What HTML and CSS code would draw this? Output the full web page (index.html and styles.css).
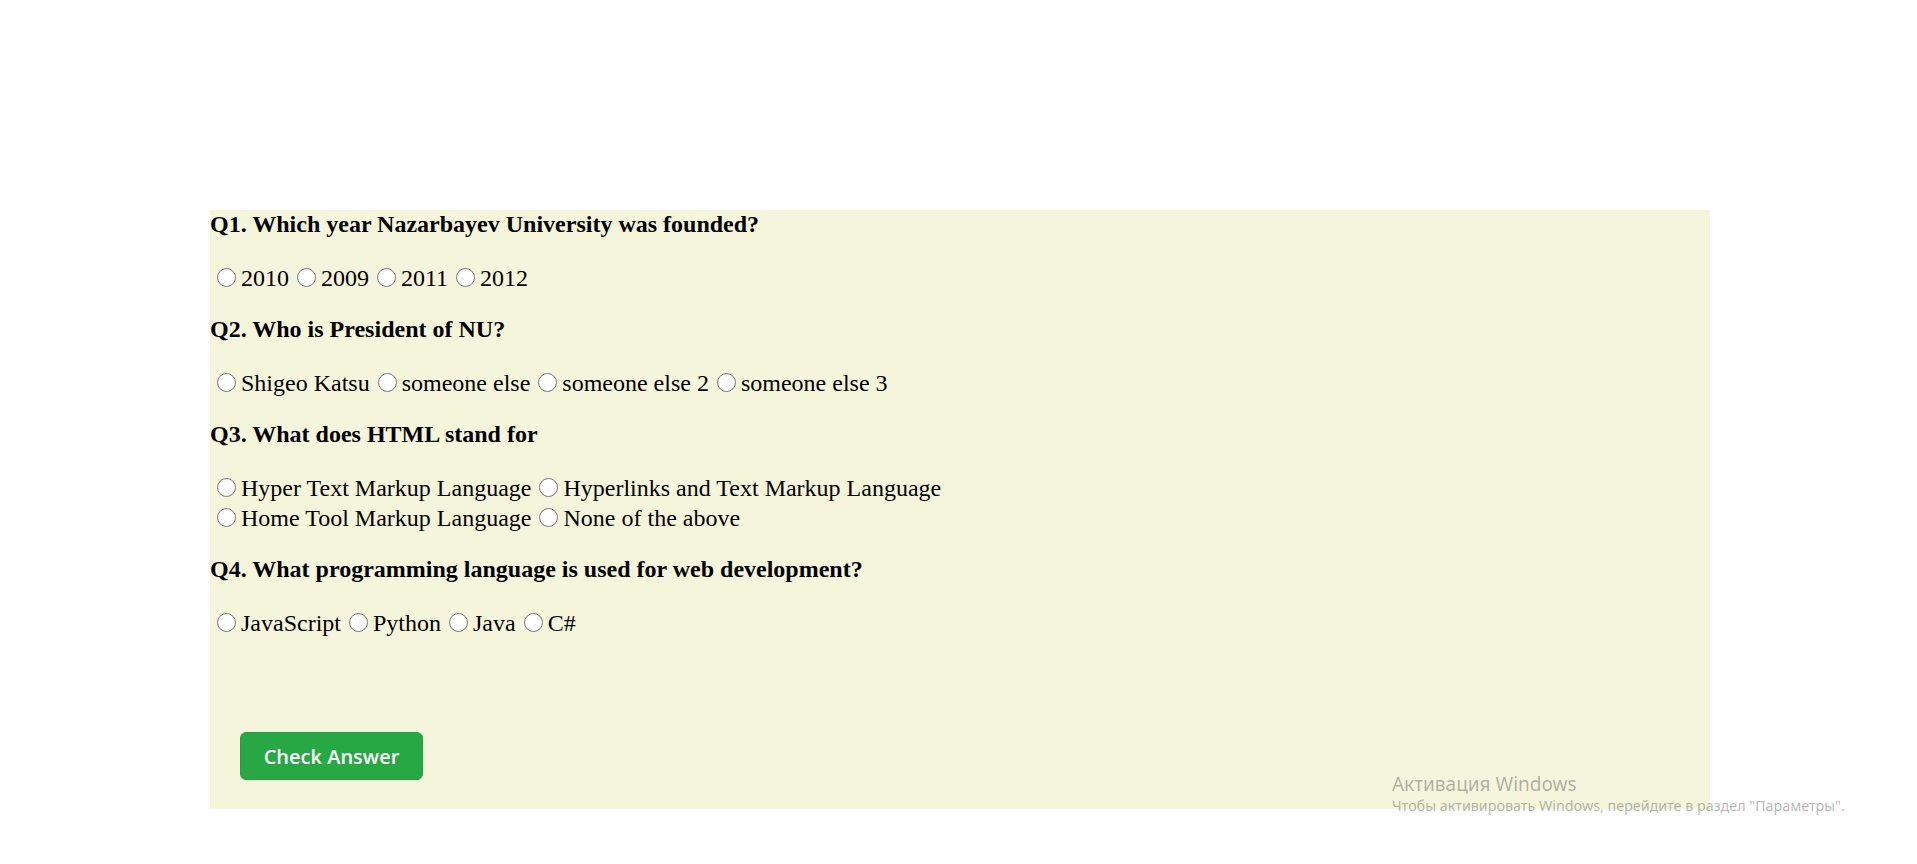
FILE: index.html
```html
<!DOCTYPE html>
<html>
<head>
<meta charset="utf-8">
<link rel="stylesheet" href="styles.css">
</head>
<body>
<div class="quiz">
  <h3 class="question">Q1. Which year Nazarbayev University was founded?</h3>
  <div class="options">
    <input type="radio" name="q1" class="radio">2010 <input type="radio" name="q1" class="radio">2009 <input type="radio" name="q1" class="radio">2011 <input type="radio" name="q1" class="radio">2012
  </div>
  <h3 class="question">Q2. Who is President of NU?</h3>
  <div class="options">
    <input type="radio" name="q2" class="radio">Shigeo Katsu <input type="radio" name="q2" class="radio">someone else <input type="radio" name="q2" class="radio">someone else 2 <input type="radio" name="q2" class="radio">someone else 3
  </div>
  <h3 class="question">Q3. What does HTML stand for</h3>
  <div class="options">
    <input type="radio" name="q3" class="radio">Hyper Text Markup Language <input type="radio" name="q3" class="radio">Hyperlinks and Text Markup Language<br><input type="radio" name="q3" class="radio">Home Tool Markup Language <input type="radio" name="q3" class="radio">None of the above
  </div>
  <h3 class="question">Q4. What programming language is used for web development?</h3>
  <div class="options">
    <input type="radio" name="q4" class="radio">JavaScript <input type="radio" name="q4" class="radio">Python <input type="radio" name="q4" class="radio">Java <input type="radio" name="q4" class="radio">C#
  </div>
  <button class="check-btn">Check Answer</button>
</div>
<div class="activation">
  <div class="activation-title">Активация Windows</div>
  <div class="activation-sub">Чтобы активировать Windows, перейдите в раздел "Параметры".</div>
</div>
</body>
</html>
```

FILE: styles.css
```css
html, body {
  margin: 0;
  padding: 0;
  background: #ffffff;
}

body {
  font-family: "Liberation Serif", "Times New Roman", serif;
  color: #000;
  padding-top: 210px;
}

.quiz {
  margin-left: 210px;
  width: 1500px;
  height: 599px;
  background: #f5f5dc;
  box-sizing: border-box;
  padding-top: 1px;
}

.question {
  margin: -1px 0 25px 0;
  font-size: 24px;
  font-weight: bold;
  line-height: 28px;
}

.options {
  font-size: 24px;
  line-height: 30px;
  margin-bottom: 23px;
  padding-left: 5px;
}

.radio {
  width: 19px;
  height: 19px;
  margin: 0 5px 0 2px;
  vertical-align: -1px;
}

.check-btn {
  display: block;
  margin: 94px 0 0 30px;
  width: 183px;
  height: 48px;
  background: #28a745;
  color: #fff;
  border: 1px solid #25a044;
  border-radius: 6px;
  font-family: "Open Sans", "Noto Sans", sans-serif;
  font-weight: 600;
  font-size: 20px;
  padding: 0;
}

.activation {
  position: absolute;
  left: 1392px;
  top: 772px;
  font-family: "Noto Sans", "Open Sans", sans-serif;
  color: rgba(90, 90, 90, 0.45);
}

.activation-title {
  font-size: 19px;
  line-height: 24px;
}

.activation-sub {
  font-size: 14.3px;
  line-height: 20px;
}
```
